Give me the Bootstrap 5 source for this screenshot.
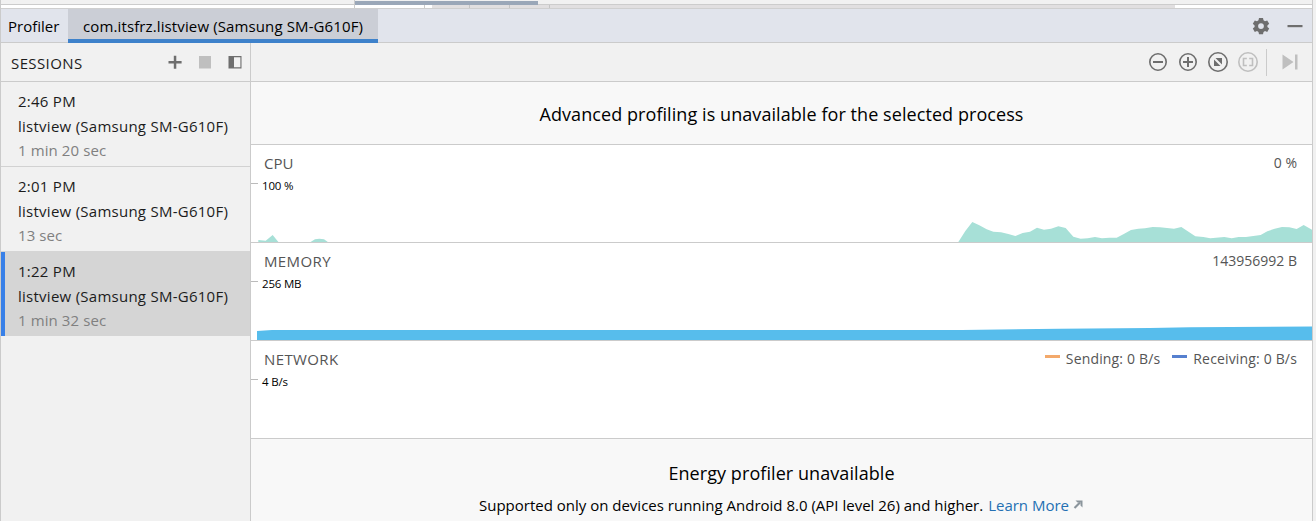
<!DOCTYPE html>
<html lang="en">
<head>
<meta charset="utf-8">
<title>Profiler</title>
<link href="https://cdn.jsdelivr.net/npm/bootstrap@5.3.0/dist/css/bootstrap.min.css" rel="stylesheet">
<style>
:root{--line:#cbcbcb;--ink:#1c1c1c}
body{font-family:"Open Sans","Noto Sans",sans-serif;font-size:15px;line-height:20px;color:var(--ink);background:#f1f1f1;height:521px;overflow:hidden}
.window{width:1313px;height:521px;border-left:1px solid var(--line);border-right:1px solid var(--line)}
.t{white-space:nowrap;display:block}
.editor-strip{height:9px;border-bottom:1px solid #cfcfcf}
.strip-left{width:354px;border-right:1px solid var(--line);background:linear-gradient(#f1f1f1 4px,#ccc 4px 5px,#fff 5px)}
.strip-tab{width:183px;background:linear-gradient(#f1f1f1 1px,#9aa7b8 1px 5px,transparent 5px)}
.strip-right{background:linear-gradient(#f1f1f1 4px,#ccc 4px 5px,transparent 5px)}
.strip-mid{background:linear-gradient(90deg,#fff 69px,#ccc 69px 70px,#fff 70px 77px,#e1dfe0 77px 114px,#c4c4c4 114px 115px,#e1dfe0 115px 154px,#c4c4c4 154px 155px,#e1dfe0 155px 194px,#c4c4c4 194px 195px,#e1dfe0 195px 820px,#fff 820px)}
.titlebar{height:34px;background:#e1e4ec;border-bottom:1px solid var(--line);color:#000}
.tool-name{width:67px;padding:7px 0 0 7px}
.session-tab{width:310px;height:34px;background:#cbced6;border-bottom:4px solid #3e82cb;padding:7px 0 0 15px;letter-spacing:.12px}
.sidebar{width:250px;border-right:1px solid var(--line)}
.bar{height:39px;border-bottom:1px solid var(--line)}
.heading{padding:10px 0 0 10px;letter-spacing:.4px}
.session{height:85px;border-bottom:1px solid #d2d2d2;padding:9px 0 0 17px;letter-spacing:.26px}
.session.before-chosen{border-color:#d5d5d5}
.session .t{height:25px;line-height:25px;margin-top:-2px;margin-bottom:2px}
.session .dim{color:#808080;margin-top:-3px;letter-spacing:.1px}
.session.chosen{height:84px;background:#d5d5d5;border:0;box-shadow:inset 4px 0 #3880e8}
.notice{background:#f8f8f8;color:#000}
.notice-top{height:63px;padding-top:2px;border-bottom:1px solid var(--line)}
.notice-energy{padding-top:22px}
.monitor{height:98px;background:#fff;border-bottom:1px solid var(--line);color:#555}
.monitor-head{height:30px;padding:8px 15px 0 13px}
.monitor-name{letter-spacing:.38px}
.scale{height:20px;color:#000;font-size:11.5px;line-height:21px;letter-spacing:-.2px}
.tick{width:7px;height:1px;background:#bbb;margin:8px 4px 0 0}
.key{width:15px;height:3px;margin:6px 6px 0 0}
.send{background:#f3a96b}
.recv{background:#5680cf;margin-left:12px}
.legend{letter-spacing:.16px}
.big{font-size:18px;line-height:24px;letter-spacing:.07px}
.energy-note{padding-top:10px}
.learn{color:#2470b3;text-decoration:none;margin-left:5px}
.go{margin-left:3px}
.fs14{font-size:14px}
</style>
</head>
<body>
<div class="window d-flex flex-column">
  <div class="editor-strip d-flex flex-shrink-0">
    <div class="strip-left"></div>
    <div class="strip-mid flex-grow-1 d-flex"><div class="strip-tab"></div><div class="strip-right flex-grow-1"></div></div>
  </div>
  <header class="titlebar d-flex flex-shrink-0">
    <div class="tool-name"><span class="t">Profiler</span></div>
    <div class="session-tab"><span class="t">com.itsfrz.listview (Samsung SM-G610F)</span></div>
    <svg class="ms-auto" width="60" height="33" viewBox="1252 9 60 33" fill="#6e6e6e"><path fill-rule="evenodd" d="M1259 18h4l.5 2.300 1.500.9 2.200-.8 2 3.400-1.800 1.600v1.500l1.800 1.600-2 3.400-2.200-.8-1.500.9-.5 2.300h-4l-.5-2.300-1.500-.9-2.200.8-2-3.400 1.800-1.600v-1.500l-1.800-1.600 2-3.400 2.200.8 1.500-.9zM1261 23.200a2.900 2.900 0 1 0 0 5.800 2.900 2.900 0 0 0 0-5.800z"/><path d="M1287.500 25h15v2.200h-15z"/></svg>
  </header>
  <div class="d-flex flex-grow-1">
    <aside class="sidebar flex-shrink-0">
      <div class="bar d-flex">
        <span class="t heading">SESSIONS</span>
        <svg class="ms-auto" width="89" height="38" viewBox="161 43 89 38" fill="#6e6e6e"><path d="M168.500 61h5.300v-5.300h2.500V61h5.300v2.500h-5.300v5.200h-2.500v-5.200h-5.300z"/><path fill="#bfbfbf" d="M199 56h12v12.500h-12z"/><path fill-rule="evenodd" d="M228.500 56h13v12.500h-13zM234 57.200v10.100h6.400V57.200z"/></svg>
      </div>
      <div class="session"><span class="t">2:46 PM</span><span class="t">listview (Samsung SM-G610F)</span><span class="t dim">1 min 20 sec</span></div>
      <div class="session before-chosen"><span class="t">2:01 PM</span><span class="t">listview (Samsung SM-G610F)</span><span class="t dim">13 sec</span></div>
      <div class="session chosen"><span class="t">1:22 PM</span><span class="t">listview (Samsung SM-G610F)</span><span class="t dim">1 min 32 sec</span></div>
    </aside>
    <main class="flex-grow-1 d-flex flex-column">
      <div class="bar d-flex justify-content-end flex-shrink-0">
        <svg width="172" height="38" viewBox="1140 43 172 38" fill="none" stroke="#6e6e6e" stroke-width="1.600">
          <circle cx="1158" cy="62" r="8.200"/><path stroke-width="2" d="M1153 62h10"/>
          <circle cx="1188" cy="62" r="8.200"/><path stroke-width="2" d="M1183 62h10M1188 57v10"/>
          <circle cx="1218" cy="62" r="9.200"/><path fill="#6e6e6e" stroke="none" d="M1215.500 58h6.500v6.500zM1214 59.500v6.500h6.500z"/>
          <g stroke="#bfbfbf"><circle cx="1248" cy="62" r="9.200"/><path d="M1246.800 58.500h-3.300v7h3.300M1249.200 58.500h3.300v7h-3.300"/></g>
          <path stroke="#cbcbcb" stroke-width="1" d="M1266.500 49v27"/>
          <path fill="#bfbfbf" stroke="none" d="M1282.500 54.500l11 7.500-11 7.500zM1295 54.500h2.500v15h-2.500z"/>
        </svg>
      </div>
      <section class="notice notice-top d-flex align-items-center justify-content-center flex-shrink-0"><span class="t big">Advanced profiling is unavailable for the selected process</span></section>
      <section class="monitor d-flex flex-column flex-shrink-0">
        <div class="monitor-head d-flex justify-content-between"><span class="t">CPU</span><span class="t fs14">0 %</span></div>
        <div class="scale d-flex"><i class="tick"></i><span class="t">100 %</span></div>
        <svg class="mt-auto" width="1061" height="24" viewBox="0 0 1061 24" fill="#a7e0d7">
          <path transform="translate(-251 -8) scale(.33333)" d="M775 97v-7l22 2 21-17 18 22zM930 97l15-9 13-2 14 2 13 9z"/>
          <path transform="translate(689 -78) scale(.33333)" d="M55 306L76 273 97 246 118 256 140 268 160 275 183 277 205 282 226 288 248 279 270 275 291 263 312 269 333 266 355 259 377 264 400 290 422 296 443 295 465 291 486 295 508 293 530 293 550 283 573 270 595 266 615 265 638 261 660 262 702 266 724 261 766 289 790 291 811 295 853 291 875 295 896 291 918 291 962 285 982 274 1004 266 1026 261 1048 262 1070 267 1091 255 1116 269V306z"/>
        </svg>
      </section>
      <section class="monitor d-flex flex-column flex-shrink-0">
        <div class="monitor-head d-flex justify-content-between"><span class="t monitor-name">MEMORY</span><span class="t fs14">143956992 B</span></div>
        <div class="scale d-flex"><i class="tick"></i><span class="t">256 MB</span></div>
        <svg class="mt-auto" width="1061" height="24" viewBox="251 316 1061 24" fill="#57bdec"><path d="M257 340v-9l15-1h690l98-1.200 90-.8 40-.8 122-.6V340z"/></svg>
      </section>
      <section class="monitor flex-shrink-0">
        <div class="monitor-head d-flex"><span class="t monitor-name me-auto">NETWORK</span>
          <div class="legend d-flex fs14"><i class="key send"></i><span class="t">Sending: 0 B/s</span><i class="key recv"></i><span class="t">Receiving: 0 B/s</span></div></div>
        <div class="scale d-flex"><i class="tick"></i><span class="t">4 B/s</span></div>
      </section>
      <section class="notice notice-energy flex-grow-1 d-flex flex-column align-items-center">
        <span class="t big">Energy profiler unavailable</span>
        <div class="energy-note d-flex"><span class="t">Supported only on devices running Android 8.0 (API level 26) and higher.</span><a class="learn t" href="#">Learn More</a>
          <svg class="go" width="12" height="20" fill="none" stroke="#8b959c"><path stroke-width="2.200" d="M2.500 13L8 7.500"/><path fill="#8b959c" stroke="none" d="M3.500 5.500H10.500V12.500L8.500 10.500V7.500H5.500z"/></svg></div>
      </section>
    </main>
  </div>
</div>
<script src="https://cdn.jsdelivr.net/npm/bootstrap@5.3.0/dist/js/bootstrap.bundle.min.js"></script>
</body>
</html>
